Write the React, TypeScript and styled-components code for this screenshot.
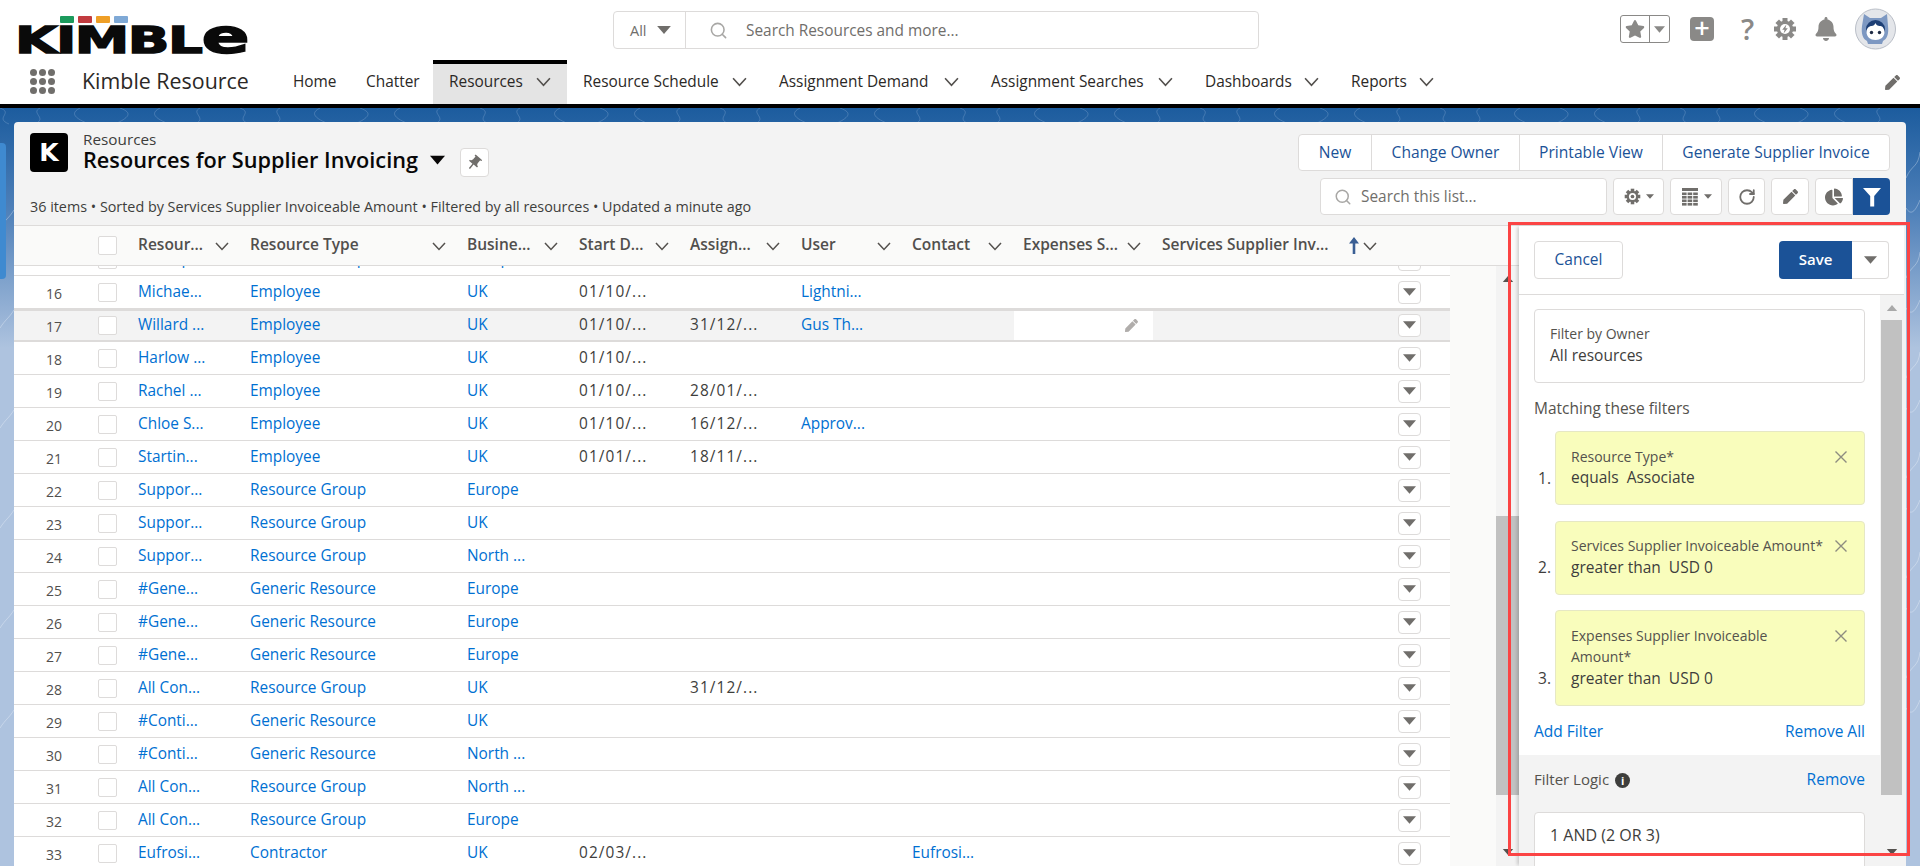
import React from "react";
import styled, {createGlobalStyle} from "styled-components";
import {Search, RotateCw} from "lucide-react";
import {FaBell, FaChartPie, FaPen, FaStar} from "react-icons/fa";
import {MdPushPin} from "react-icons/md";

const FONT = `"Open Sans", "Noto Sans", sans-serif`;

const GlobalStyle = createGlobalStyle`
    html, body {
        margin: 0;
        padding: 0;
        height: 100%;
        overflow: hidden;
        font-family: ${FONT};
        color: #3e3e3c;
    }
    * {
        box-sizing: border-box;
    }
`;

const NAV_ITEMS = [
    {label: "Home", width: 73},
    {label: "Chatter", width: 83},
    {label: "Resources", width: 134, menu: true, active: true},
    {label: "Resource Schedule", width: 196, menu: true},
    {label: "Assignment Demand", width: 212, menu: true},
    {label: "Assignment Searches", width: 214, menu: true},
    {label: "Dashboards", width: 146, menu: true},
    {label: "Reports", width: 115, menu: true},
];

const COLUMNS = [
    {label: "Resour..."},
    {label: "Resource Type"},
    {label: "Busine..."},
    {label: "Start D..."},
    {label: "Assign..."},
    {label: "User"},
    {label: "Contact"},
    {label: "Expenses S..."},
    {label: "Services Supplier Inv...", sorted: true},
];

const EMP = "Employee";
const GROUP = "Resource Group";
const GEN = "Generic Resource";

const ROWS = [
    {n: 15, name: "Backup...", type: GROUP, unit: "Europe"},
    {n: 16, name: "Michae...", type: EMP, unit: "UK", start: "01/10/...", user: "Lightni..."},
    {n: 17, name: "Willard ...", type: EMP, unit: "UK", start: "01/10/...", end: "31/12/...", user: "Gus Th...", active: true},
    {n: 18, name: "Harlow ...", type: EMP, unit: "UK", start: "01/10/..."},
    {n: 19, name: "Rachel ...", type: EMP, unit: "UK", start: "01/10/...", end: "28/01/..."},
    {n: 20, name: "Chloe S...", type: EMP, unit: "UK", start: "01/10/...", end: "16/12/...", user: "Approv..."},
    {n: 21, name: "Startin...", type: EMP, unit: "UK", start: "01/01/...", end: "18/11/..."},
    {n: 22, name: "Suppor...", type: GROUP, unit: "Europe"},
    {n: 23, name: "Suppor...", type: GROUP, unit: "UK"},
    {n: 24, name: "Suppor...", type: GROUP, unit: "North ..."},
    {n: 25, name: "#Gene...", type: GEN, unit: "Europe"},
    {n: 26, name: "#Gene...", type: GEN, unit: "Europe"},
    {n: 27, name: "#Gene...", type: GEN, unit: "Europe"},
    {n: 28, name: "All Con...", type: GROUP, unit: "UK", end: "31/12/..."},
    {n: 29, name: "#Conti...", type: GEN, unit: "UK"},
    {n: 30, name: "#Conti...", type: GEN, unit: "North ..."},
    {n: 31, name: "All Con...", type: GROUP, unit: "North ..."},
    {n: 32, name: "All Con...", type: GROUP, unit: "Europe"},
    {n: 33, name: "Eufrosi...", type: "Contractor", unit: "UK", start: "02/03/...", contact: "Eufrosi..."},
];

const FILTERS = [
    {label: "Resource Type*", value: "equals\u00a0\u00a0Associate"},
    {label: "Services Supplier Invoiceable Amount*", value: "greater than\u00a0\u00a0USD 0"},
    {label: "Expenses Supplier Invoiceable Amount*", value: "greater than\u00a0\u00a0USD 0"},
];

const Chevron = ({size = 14, color = "#54514e"}: {size?: number; color?: string}) => (
    <svg width={size} height={size} viewBox="0 0 14 14" fill="none">
        <path d="M1 4l6 6.5L13 4" stroke={color} strokeWidth="1.5" />
    </svg>
);

const Caret = ({w = 12, h = 7, color = "#706e6b", up = false}: {w?: number; h?: number; color?: string; up?: boolean}) => (
    <svg width={w} height={h} viewBox="0 0 12 7">
        <path d={up ? "M6 0l6 7H0z" : "M0 0h12L6 7z"} fill={color} />
    </svg>
);

const Gear = ({size = 22, color = "#8a8987", bolt = false}: {size?: number; color?: string; bolt?: boolean}) => (
    <svg width={size} height={size} viewBox="0 0 24 24">
        {[0, 45, 90, 135, 180, 225, 270, 315].map((a) => (
            <rect key={a} x="9.5" y="1" width="5" height="5" fill={color} transform={`rotate(${a} 12 12)`} />
        ))}
        <circle cx="12" cy="12" r="8.2" fill={color} />
        <circle cx="12" cy="12" r="5" fill="#fff" />
        {bolt ? <path d="M13.4 7.6L9.2 12.8h2.4l-1 3.6 4.2-5.2h-2.4z" fill={color} /> : <circle cx="12" cy="12" r="2.6" fill={color} />}
    </svg>
);

const Avatar = () => (
    <svg width="41" height="42" viewBox="0 0 41 42">
        <circle cx="20.5" cy="21" r="20" fill="#e4e6ea" stroke="#b9bec7" />
        <path d="M9 6l6 4h11l6-4 1 12c1 8-1 13-5 15l-1 3H13l-1-3c-4-2-6-7-5-15z" fill="#7d98c2" />
        <ellipse cx="20.5" cy="21" rx="9.5" ry="9" fill="#1d3f75" />
        <path d="M11.5 24c0-4 3-6 5-6 2 0 3-1 4-3 1 3 4 3 5 3 2 0 4 3 4 6 0 5-4 8-9 8s-9-3-9-8z" fill="#fff" />
        <circle cx="16.5" cy="24.5" r="1.7" fill="#1d2a44" />
        <circle cx="24.5" cy="24.5" r="1.7" fill="#1d2a44" />
    </svg>
);

const TableIcon = () => (
    <svg width="18" height="20" viewBox="0 0 18 20" fill="#706e6b">
        <rect x="1" y="1" width="16" height="3" />
        {[5.5, 9, 12.5, 16].map((y) =>
            [1, 6.6, 12.2].map((x) => <rect key={`${x}-${y}`} x={x} y={y} width="4.6" height="2.6" />)
        )}
    </svg>
);

const Funnel = () => (
    <svg width="18" height="20" viewBox="0 0 18 20" fill="#fff">
        <path d="M0 1h18l-6.8 8v10.5H7.2V9z" />
    </svg>
);

const UpArrow = () => (
    <svg width="12" height="17" viewBox="0 0 12 17" fill="#3a5f94">
        <path d="M6 0l5 6.5H7.3V17H4.7V6.5H1z" />
    </svg>
);

const BackgroundLines = () => (
    <Texture viewBox="0 0 1920 758" preserveAspectRatio="none">
        {Array.from({length: 48}).map((_, i) => {
            const x = i * 40;
            return (
                <path
                    key={i}
                    d={`M${x} 0c${i % 3 === 0 ? 14 : -10} 5 ${i % 2 ? 8 : -6} 10 ${i % 2 ? -5 : 9} 16`}
                    stroke="#7fa5d0"
                    strokeOpacity="0.4"
                    fill="none"
                />
            );
        })}
        {[0, 1, 2, 3, 4, 5].map((i) => (
            <path
                key={i}
                d={`M1906 ${70 + i * 100}c6 -14 12 -10 14 -26M1906 ${100 + i * 100}c5 8 9 4 14 -8M0 ${120 + i * 100}c5 -8 9 -10 14 -18`}
                stroke="#ffffff"
                strokeOpacity="0.3"
                fill="none"
            />
        ))}
    </Texture>
);

export default function App() {
    return (
        <Page>
            <GlobalStyle />
            <Header>
                <TopBar>
                    <Logo>
                        <LogoBars>
                            <LogoBar $color="#1c9a5c" />
                            <LogoBar $color="#c23b3f" />
                            <LogoBar $color="#ef9f26" />
                            <LogoBar $color="#7fa9d6" />
                        </LogoBars>
                        <LogoText>
                            KIMBL<LogoE>e</LogoE>
                        </LogoText>
                    </Logo>
                    <GlobalSearch>
                        <ScopeSelect>
                            All
                            <Caret w={14} h={8} />
                        </ScopeSelect>
                        <SearchField>
                            <Search size={19} color="#a8a7a5" strokeWidth={2} />
                            <span>Search Resources and more...</span>
                        </SearchField>
                    </GlobalSearch>
                    <Utilities>
                        <Favorites>
                            <FavPart $wide>
                                <FaStar size={20} color="#8a8987" />
                            </FavPart>
                            <FavPart>
                                <Caret w={11} h={7} color="#8a8987" />
                            </FavPart>
                        </Favorites>
                        <PlusTile>+</PlusTile>
                        <HelpMark>?</HelpMark>
                        <Gear size={24} bolt />
                        <FaBell size={24} color="#8a8987" />
                        <Avatar />
                    </Utilities>
                </TopBar>
                <NavBar>
                    <AppLauncher>
                        {Array.from({length: 9}).map((_, i) => (
                            <LauncherDot key={i} />
                        ))}
                    </AppLauncher>
                    <AppName>Kimble Resource</AppName>
                    <NavList>
                        {NAV_ITEMS.map((item) => (
                            <NavItem key={item.label} $width={item.width} $active={item.active}>
                                {item.label}
                                {item.menu && <Chevron size={15} />}
                            </NavItem>
                        ))}
                    </NavList>
                    <NavEdit>
                        <FaPen size={15} color="#706e6b" />
                    </NavEdit>
                </NavBar>
            </Header>

            <Stage>
                <BackgroundLines />
                <SideTab />
                <ListPanel>
                    <ListHeader>
                        <TitleBlock>
                            <TitleRow>
                                <BrandTile>K</BrandTile>
                                <TitleText>
                                    <Breadcrumb>Resources</Breadcrumb>
                                    <Title>
                                        Resources for Supplier Invoicing
                                        <Caret w={15} h={10} color="#080707" />
                                        <PinButton>
                                            <MdPushPin size={18} color="#706e6b" style={{transform: "rotate(40deg)"}} />
                                        </PinButton>
                                    </Title>
                                </TitleText>
                            </TitleRow>
                            <Meta>36 items • Sorted by Services Supplier Invoiceable Amount • Filtered by all resources • Updated a minute ago</Meta>
                        </TitleBlock>
                        <ActionsBlock>
                            <ButtonGroup>
                                <GroupButton $width={73}>New</GroupButton>
                                <GroupButton $width={148}>Change Owner</GroupButton>
                                <GroupButton $width={143}>Printable View</GroupButton>
                                <GroupButton $width={226}>Generate Supplier Invoice</GroupButton>
                            </ButtonGroup>
                            <ToolRow>
                                <ListSearch>
                                    <Search size={18} color="#a8a7a5" strokeWidth={2} />
                                    <span>Search this list...</span>
                                </ListSearch>
                                <ToolButton $width={51}>
                                    <Gear size={17} color="#706e6b" />
                                    <Caret w={8} h={5} />
                                </ToolButton>
                                <ToolButton $width={52}>
                                    <TableIcon />
                                    <Caret w={8} h={5} />
                                </ToolButton>
                                <ToolButton $width={37}>
                                    <RotateCw size={18} color="#706e6b" strokeWidth={2.4} />
                                </ToolButton>
                                <ToolButton $width={38}>
                                    <FaPen size={15} color="#706e6b" />
                                </ToolButton>
                                <ToolPair>
                                    <ToolButton $width={38} $joined>
                                        <FaChartPie size={18} color="#706e6b" />
                                    </ToolButton>
                                    <FilterToggle>
                                        <Funnel />
                                    </FilterToggle>
                                </ToolPair>
                            </ToolRow>
                        </ActionsBlock>
                    </ListHeader>

                    <ListContent>
                        <TableArea>
                            <HeadRow>
                                <span />
                                <CheckCell>
                                    <Checkbox />
                                </CheckCell>
                                {COLUMNS.map((col) => (
                                    <HeadCell key={col.label}>
                                        <HeadLabel>{col.label}</HeadLabel>
                                        {col.sorted && (
                                            <SortArrow>
                                                <UpArrow />
                                            </SortArrow>
                                        )}
                                        <Chevron />
                                    </HeadCell>
                                ))}
                            </HeadRow>
                            <TableBody>
                                <RowsClip>
                                    <RowsScrolled>
                                        {ROWS.map((r) => (
                                            <Row key={r.n} $active={r.active}>
                                                <NumCell>{r.n}</NumCell>
                                                <CheckCell>
                                                    <Checkbox />
                                                </CheckCell>
                                                <LinkCell>{r.name}</LinkCell>
                                                <LinkCell>{r.type}</LinkCell>
                                                <LinkCell>{r.unit}</LinkCell>
                                                <DateCell>{r.start}</DateCell>
                                                <DateCell>{r.end}</DateCell>
                                                <LinkCell>{r.user}</LinkCell>
                                                <LinkCell>{r.contact}</LinkCell>
                                                {r.active ? (
                                                    <EditCell>
                                                        <FaPen size={13} color="#b0adab" />
                                                    </EditCell>
                                                ) : (
                                                    <Cell />
                                                )}
                                                <Cell />
                                                <ActionCell>
                                                    <RowMenu>
                                                        <Caret w={13} h={8} />
                                                    </RowMenu>
                                                </ActionCell>
                                            </Row>
                                        ))}
                                    </RowsScrolled>
                                </RowsClip>
                                <TableGutter />
                                <TableScroll>
                                    <ScrollEnd>
                                        <Caret w={12} h={6} color="#54514e" up />
                                    </ScrollEnd>
                                    <TableThumb />
                                    <ScrollEnd $bottom>
                                        <Caret w={12} h={6} color="#54514e" />
                                    </ScrollEnd>
                                </TableScroll>
                            </TableBody>
                        </TableArea>

                        <FilterPanel>
                            <PanelHead>
                                <CancelButton>Cancel</CancelButton>
                                <SaveGroup>
                                    <SaveButton>Save</SaveButton>
                                    <SaveMenu>
                                        <Caret w={13} h={8} />
                                    </SaveMenu>
                                </SaveGroup>
                            </PanelHead>
                            <PanelBody>
                                <PanelContent>
                                    <FilterForm>
                                        <OwnerBox>
                                            <FieldLabel>Filter by Owner</FieldLabel>
                                            <FieldValue>All resources</FieldValue>
                                        </OwnerBox>
                                        <MatchTitle>Matching these filters</MatchTitle>
                                        <FilterList>
                                            {FILTERS.map((f, i) => (
                                                <FilterRow key={f.label}>
                                                    <FilterIndex>{i + 1}.</FilterIndex>
                                                    <FilterCard>
                                                        <FilterText>
                                                            <FieldLabel>{f.label}</FieldLabel>
                                                            <FieldValue>{f.value}</FieldValue>
                                                        </FilterText>
                                                        <CloseMark viewBox="0 0 12 12">
                                                            <path d="M0.5 0.5l11 11M11.5 0.5l-11 11" stroke="#8d8c80" strokeWidth="1.4" />
                                                        </CloseMark>
                                                    </FilterCard>
                                                </FilterRow>
                                            ))}
                                        </FilterList>
                                        <LinkRow>
                                            <PanelLink>Add Filter</PanelLink>
                                            <PanelLink>Remove All</PanelLink>
                                        </LinkRow>
                                    </FilterForm>
                                    <LogicSection>
                                        <LogicRow>
                                            <LogicLabel>
                                                Filter Logic
                                                <InfoDot>i</InfoDot>
                                            </LogicLabel>
                                            <PanelLink>Remove</PanelLink>
                                        </LogicRow>
                                        <LogicInput>1 AND (2 OR 3)</LogicInput>
                                    </LogicSection>
                                </PanelContent>
                                <PanelScroll>
                                    <ScrollEnd>
                                        <Caret w={12} h={6} color="#a9a9a9" up />
                                    </ScrollEnd>
                                    <PanelThumb />
                                    <ScrollEnd $bottom>
                                        <Caret w={12} h={6} color="#54514e" />
                                    </ScrollEnd>
                                </PanelScroll>
                            </PanelBody>
                        </FilterPanel>
                    </ListContent>
                </ListPanel>
            </Stage>
            <Highlight />
        </Page>
    );
}

const Page = styled.div`
    position: relative;
    width: 1920px;
    height: 866px;
    overflow: hidden;
    display: flex;
    flex-direction: column;
    background: #fff;
`;

const Header = styled.header`
    height: 108px;
    flex: none;
    background: #fff;
    border-bottom: 4px solid #000;
`;

const TopBar = styled.div`
    height: 60px;
    display: flex;
    align-items: flex-start;
    position: relative;
`;

const Logo = styled.div`
    width: 613px;
    flex: none;
    padding: 16px 0 0 15px;
`;

const LogoBars = styled.div`
    display: flex;
    gap: 4px;
    padding-left: 45px;
    margin-bottom: 3px;
`;

const LogoBar = styled.span<{$color: string}>`
    width: 14px;
    height: 7px;
    border-radius: 1px;
    background: ${({$color}) => $color};
`;

const LogoText = styled.div`
    font-family: "DejaVu Sans", sans-serif;
    font-weight: 700;
    font-size: 37px;
    line-height: 30px;
    height: 30px;
    color: #0a0a0a;
    -webkit-text-stroke: 1.4px #0a0a0a;
    transform: scaleX(1.48);
    transform-origin: left top;
    white-space: nowrap;
    letter-spacing: -1px;
`;

const LogoE = styled.span`
    font-size: 48px;
    line-height: 20px;
`;

const GlobalSearch = styled.div`
    margin-top: 11px;
    width: 646px;
    height: 38px;
    flex: none;
    display: flex;
    border: 1px solid #dddbda;
    border-radius: 4px;
    font-size: 14.5px;
    color: #706e6b;
`;

const ScopeSelect = styled.div`
    width: 72px;
    display: flex;
    align-items: center;
    gap: 10px;
    padding-left: 16px;
    border-right: 1px solid #dddbda;
`;

const SearchField = styled.div`
    display: flex;
    align-items: center;
    gap: 18px;
    padding-left: 23px;
    font-size: 15.4px;
`;

const Utilities = styled.div`
    margin-left: 361px;
    display: flex;
    align-items: center;
    height: 58px;
    gap: 17px;
    flex: none;
`;

const Favorites = styled.div`
    width: 50px;
    height: 28px;
    display: flex;
    border: 1px solid #8a8987;
    border-radius: 3px;
    margin-right: 3px;
`;

const FavPart = styled.div<{$wide?: boolean}>`
    flex: ${({$wide}) => ($wide ? "none" : 1)};
    width: ${({$wide}) => ($wide ? "29px" : "auto")};
    display: flex;
    align-items: center;
    justify-content: center;
    border-right: ${({$wide}) => ($wide ? "1px solid #8a8987" : "none")};
`;

const PlusTile = styled.div`
    width: 24px;
    height: 24px;
    border-radius: 4px;
    background: #8a8987;
    color: #fff;
    font-size: 27px;
    font-weight: 600;
    line-height: 22px;
    text-align: center;
`;

const HelpMark = styled.div`
    width: 15px;
    font-size: 29px;
    font-weight: 600;
    line-height: 30px;
    color: #8a8987;
    text-align: center;
    margin-left: 9px;
    margin-right: 1px;
`;

const NavBar = styled.nav`
    height: 44px;
    display: flex;
    align-items: stretch;
    padding-left: 30px;
`;

const AppLauncher = styled.div`
    width: 25px;
    height: 25px;
    margin-top: 9px;
    flex: none;
    display: grid;
    grid-template-columns: repeat(3, 7px);
    grid-auto-rows: 7px;
    gap: 2px;
`;

const LauncherDot = styled.span`
    border-radius: 50%;
    background: #706e6b;
`;

const AppName = styled.div`
    width: 222px;
    flex: none;
    padding-left: 27px;
    font-size: 21.4px;
    line-height: 42px;
    color: #2b2826;
    white-space: nowrap;
`;

const NavList = styled.div`
    display: flex;
    align-items: stretch;
`;

const NavItem = styled.div<{$width: number; $active?: boolean}>`
    width: ${({$width}) => $width}px;
    flex: none;
    display: flex;
    align-items: center;
    justify-content: space-between;
    padding: 0 16px 5px;
    font-size: 15.4px;
    color: #2b2826;
    white-space: nowrap;
    background: ${({$active}) => ($active ? "#e4e4e4" : "transparent")};
    border-top: 4px solid ${({$active}) => ($active ? "#000" : "transparent")};
`;

const NavEdit = styled.div`
    margin-left: auto;
    padding: 13px 20px 0 0;
`;

const Stage = styled.main`
    position: relative;
    flex: 1;
    min-height: 0;
    padding: 14px 14px 0;
    background: linear-gradient(180deg, #1c5c9e 0, #4d7fb8 100px, #aec3df 240px);
`;

const Texture = styled.svg`
    position: absolute;
    left: 0;
    top: 0;
    width: 100%;
    height: 100%;
`;

const SideTab = styled.div`
    position: absolute;
    left: 0;
    top: 35px;
    width: 6px;
    height: 136px;
    background: #3f8ad0;
    border-radius: 0 4px 4px 0;
`;

const ListPanel = styled.section`
    position: relative;
    height: 100%;
    display: flex;
    flex-direction: column;
    background: #f3f3f3;
    border-radius: 4px 4px 0 0;
    overflow: hidden;
`;

const ListHeader = styled.div`
    height: 104px;
    flex: none;
    display: flex;
    justify-content: space-between;
    padding: 12px 16px 0 16px;
    border-bottom: 1px solid #dddbda;
`;

const TitleBlock = styled.div`
    display: flex;
    flex-direction: column;
`;

const TitleRow = styled.div`
    display: flex;
    gap: 15px;
`;

const BrandTile = styled.div`
    width: 38px;
    height: 39px;
    flex: none;
    margin-top: -1px;
    border-radius: 4px;
    background: #000;
    color: #fff;
    font-family: "DejaVu Sans", sans-serif;
    font-weight: 700;
    font-size: 25px;
    line-height: 39px;
    text-align: center;
`;

const TitleText = styled.div`
    display: flex;
    flex-direction: column;
`;

const Breadcrumb = styled.div`
    margin-top: -2px;
    font-size: 15.3px;
    line-height: 14px;
    color: #3e3e3c;
`;

const Title = styled.h1`
    margin: -1px 0 0;
    height: 30px;
    display: flex;
    align-items: center;
    gap: 12px;
    font-size: 21.7px;
    font-weight: 600;
    line-height: 24px;
    color: #080707;
    white-space: nowrap;
`;

const PinButton = styled.div`
    width: 29px;
    height: 29px;
    margin: 5px 0 0 3px;
    display: flex;
    align-items: center;
    justify-content: center;
    background: #fff;
    border: 1px solid #dddbda;
    border-radius: 4px;
`;

const Meta = styled.div`
    margin-top: 22px;
    font-size: 14.35px;
    line-height: 20px;
    color: #3e3e3c;
    white-space: nowrap;
`;

const ActionsBlock = styled.div`
    display: flex;
    flex-direction: column;
    align-items: flex-end;
    gap: 7px;
`;

const ButtonGroup = styled.div`
    display: flex;
    height: 37px;
    background: #fff;
    border: 1px solid #dddbda;
    border-radius: 4px;
`;

const GroupButton = styled.div<{$width: number}>`
    width: ${({$width}) => $width}px;
    padding-bottom: 2px;
    display: flex;
    align-items: center;
    justify-content: center;
    font-size: 15.6px;
    color: #1b5297;
    white-space: nowrap;

    &:not(:last-child) {
        border-right: 1px solid #dddbda;
    }
`;

const ToolRow = styled.div`
    display: flex;
    gap: 6px;
    height: 37px;
`;

const ListSearch = styled.div`
    width: 287px;
    display: flex;
    align-items: center;
    gap: 9px;
    padding-left: 13px;
    background: #fff;
    border: 1px solid #dddbda;
    border-radius: 4px;
    font-size: 15.4px;
    color: #706e6b;
`;

const ToolButton = styled.div<{$width: number; $joined?: boolean}>`
    width: ${({$width}) => $width}px;
    display: flex;
    align-items: center;
    justify-content: center;
    gap: 5px;
    background: #fff;
    border: 1px solid #dddbda;
    border-radius: ${({$joined}) => ($joined ? "4px 0 0 4px" : "4px")};
`;

const ToolPair = styled.div`
    display: flex;
`;

const FilterToggle = styled.div`
    width: 37px;
    display: flex;
    align-items: center;
    justify-content: center;
    background: #1b5297;
    border-radius: 0 4px 4px 0;
`;

const ListContent = styled.div`
    flex: 1;
    min-height: 0;
    display: flex;
`;

const TableArea = styled.div`
    width: 1505px;
    flex: none;
    display: flex;
    flex-direction: column;
`;

const GRID = "70px 45px 112px 217px 112px 111px 111px 111px 111px 139px 236px 61px";

const HeadRow = styled.div`
    height: 40px;
    flex: none;
    display: grid;
    grid-template-columns: ${GRID};
    align-items: center;
    background: #fafaf9;
    border-bottom: 1px solid #dddbda;
`;

const HeadCell = styled.div`
    display: flex;
    align-items: center;
    padding: 0 12px 0 9px;
`;

const HeadLabel = styled.span`
    flex: 1;
    padding-bottom: 4px;
    font-size: 15.5px;
    font-weight: 600;
    color: #514f4d;
    white-space: nowrap;
`;

const SortArrow = styled.span`
    display: flex;
    margin-right: 3px;
`;

const TableBody = styled.div`
    flex: 1;
    min-height: 0;
    display: flex;
`;

const RowsClip = styled.div`
    width: 1436px;
    flex: none;
    overflow: hidden;
    background: #fff;
`;

const RowsScrolled = styled.div`
    margin-top: -23px;
`;

const Row = styled.div<{$active?: boolean}>`
    height: 33px;
    display: grid;
    grid-template-columns: ${GRID};
    align-items: center;
    border-bottom: 1px solid #dddbda;
    background: ${({$active}) => ($active ? "#f3f3f3" : "#fff")};
    box-shadow: ${({$active}) => ($active ? "inset 0 2px 0 #dddbda, inset 0 -1px 0 #dddbda" : "none")};
`;

const NumCell = styled.div`
    padding: 3px 22px 0 0;
    font-size: 14px;
    text-align: right;
    color: #514f4d;
`;

const CheckCell = styled.div`
    padding-left: 14px;
    display: flex;
    align-items: center;
`;

const Checkbox = styled.div`
    width: 19px;
    height: 19px;
    background: #fff;
    border: 1px solid #dddbda;
    border-radius: 2px;
`;

const Cell = styled.div`
    padding: 0 0 1px 9px;
    font-size: 15.4px;
    line-height: 22px;
    color: #3e3e3c;
    white-space: nowrap;
`;

const LinkCell = styled(Cell)`
    color: #0070d2;
`;

const DateCell = styled(Cell)`
    letter-spacing: 1.1px;
`;

const EditCell = styled.div`
    align-self: stretch;
    display: flex;
    align-items: center;
    justify-content: flex-end;
    margin: 2px 0 1px;
    padding-right: 15px;
    background: #fff;
`;

const ActionCell = styled.div`
    padding-left: 9px;
`;

const RowMenu = styled.div`
    width: 23px;
    height: 23px;
    display: flex;
    align-items: center;
    justify-content: center;
    background: #fff;
    border: 1px solid #dddbda;
    border-radius: 4px;
`;

const TableGutter = styled.div`
    width: 46px;
    flex: none;
    background: #fafaf9;
`;

const TableScroll = styled.div`
    position: relative;
    flex: 1;
    display: flex;
    flex-direction: column;
    padding-top: 250px;
    background: #f3f3f3;
`;

const TableThumb = styled.div`
    height: 279px;
    background: #c1c1c1;
`;

const ScrollEnd = styled.div<{$bottom?: boolean}>`
    position: absolute;
    left: 0;
    right: 0;
    top: ${({$bottom}) => ($bottom ? "auto" : "10px")};
    bottom: ${({$bottom}) => ($bottom ? "11px" : "auto")};
    display: flex;
    justify-content: center;
`;

const FilterPanel = styled.aside`
    width: 385px;
    flex: none;
    display: flex;
    flex-direction: column;
    background: #fff;
    box-shadow: -3px 0 3px -1px rgba(0, 0, 0, 0.16);
    position: relative;
`;

const PanelHead = styled.div`
    height: 69px;
    flex: none;
    display: flex;
    align-items: center;
    justify-content: space-between;
    padding: 0 15px;
    border-bottom: 1px solid #dddbda;
`;

const CancelButton = styled.div`
    width: 89px;
    height: 38px;
    padding-bottom: 2px;
    display: flex;
    align-items: center;
    justify-content: center;
    border: 1px solid #dddbda;
    border-radius: 4px;
    font-size: 15.5px;
    color: #1b5297;
`;

const SaveGroup = styled.div`
    display: flex;
    height: 38px;
`;

const SaveButton = styled.div`
    width: 73px;
    padding-bottom: 2px;
    display: flex;
    align-items: center;
    justify-content: center;
    background: #1b5297;
    border-radius: 4px 0 0 4px;
    color: #fff;
    font-size: 15px;
    font-weight: 600;
`;

const SaveMenu = styled.div`
    width: 37px;
    display: flex;
    align-items: center;
    justify-content: center;
    border: 1px solid #dddbda;
    border-left: none;
    border-radius: 0 4px 4px 0;
`;

const PanelBody = styled.div`
    flex: 1;
    min-height: 0;
    display: flex;
    overflow: hidden;
`;

const PanelContent = styled.div`
    width: 361px;
    flex: none;
    display: flex;
    flex-direction: column;
`;

const FilterForm = styled.div`
    height: 460px;
    flex: none;
    padding: 14px 15px 0;
`;

const OwnerBox = styled.div`
    height: 74px;
    padding: 13px 15px 0;
    border: 1px solid #dddbda;
    border-radius: 4px;
`;

const FieldLabel = styled.div`
    font-size: 14px;
    line-height: 21.5px;
    color: #54524d;
`;

const FieldValue = styled.div`
    font-size: 15.5px;
    line-height: 21.5px;
    color: #3e3e3c;
    white-space: nowrap;
`;

const MatchTitle = styled.div`
    margin: 14px 0 12px;
    font-size: 15.5px;
    line-height: 22px;
    color: #54524d;
`;

const FilterList = styled.div`
    display: flex;
    flex-direction: column;
    gap: 15.5px;
`;

const FilterRow = styled.div`
    display: flex;
    align-items: flex-end;
`;

const FilterIndex = styled.div`
    width: 21px;
    flex: none;
    padding: 0 0 16px 4px;
    font-size: 15.5px;
    line-height: 21.5px;
    color: #3e3e3c;
`;

const FilterCard = styled.div`
    flex: 1;
    display: flex;
    align-items: flex-start;
    justify-content: space-between;
    padding: 13.5px 16px 15.5px 15px;
    background: #f9fdbc;
    border: 1px solid #e6e8c4;
    border-radius: 4px;
`;

const FilterText = styled.div`
    width: 256px;
    flex: none;
`;

const CloseMark = styled.svg`
    width: 12px;
    height: 12px;
    flex: none;
    margin: 5px 1px 0 0;
`;

const LinkRow = styled.div`
    display: flex;
    justify-content: space-between;
    align-items: center;
    margin-top: 14px;
`;

const LogicRow = styled(LinkRow)`
    margin-top: 13px;
`;

const PanelLink = styled.a`
    font-size: 15.5px;
    line-height: 22px;
    color: #0070d2;
`;

const LogicSection = styled.div`
    flex: 1;
    padding: 0 15px;
    background: #f3f3f3;
`;

const LogicLabel = styled.div`
    display: flex;
    align-items: center;
    gap: 6px;
    font-size: 15px;
    line-height: 22px;
    color: #54524d;
`;

const InfoDot = styled.span`
    width: 15px;
    height: 15px;
    margin-top: 2px;
    border-radius: 50%;
    background: #3e3e3c;
    color: #fff;
    font-size: 11px;
    font-weight: 700;
    line-height: 15px;
    text-align: center;
`;

const LogicInput = styled.div`
    height: 74px;
    margin-top: 22px;
    padding: 11px 15px;
    background: #fff;
    border: 1px solid #dddbda;
    border-radius: 4px;
    font-size: 16px;
    line-height: 22px;
    color: #3e3e3c;
`;

const PanelScroll = styled.div`
    position: relative;
    flex: 1;
    padding: 25px 2px 0 1px;
    background: #f3f3f3;
`;

const PanelThumb = styled.div`
    height: 475px;
    background: #c1c1c1;
`;

const Highlight = styled.div`
    position: absolute;
    left: 1508px;
    top: 222px;
    width: 402px;
    height: 634px;
    border: 3px solid #fb4444;
    pointer-events: none;
`;
